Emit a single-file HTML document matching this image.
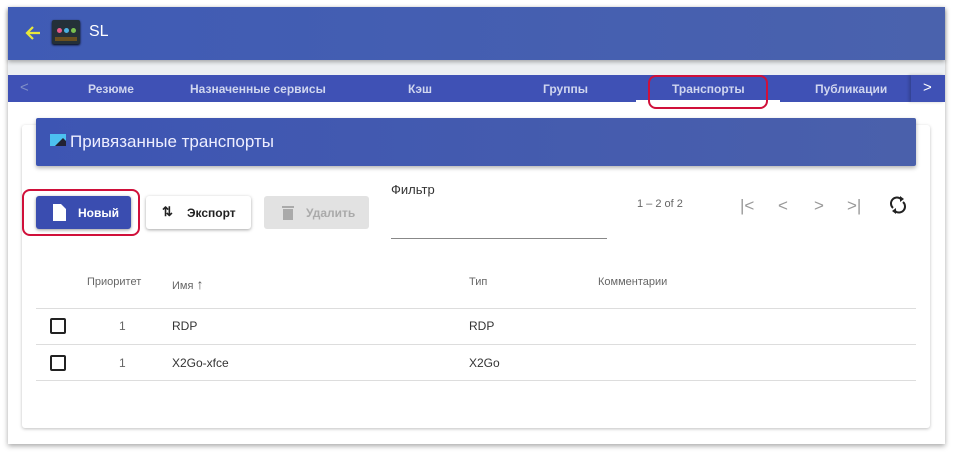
<!DOCTYPE html>
<html><head><meta charset="utf-8"><style>
*{box-sizing:border-box;margin:0;padding:0}
body{width:958px;height:457px;background:#fff;font-family:"Liberation Sans",Roboto,sans-serif;position:relative;overflow:hidden}
.outer{position:absolute;left:8px;top:7px;width:937px;height:437px;background:#fff;box-shadow:0 2px 5px rgba(0,0,0,.35)}
.hdr{position:absolute;left:8px;top:7px;width:937px;height:53px;background:linear-gradient(90deg,#3f5bb5,#4a62ad);box-shadow:0 2px 4px rgba(0,0,0,.3);z-index:2}
.strip{position:absolute;left:8px;top:60px;width:937px;height:15px;background:#eceff2}
.tabs{position:absolute;left:8px;top:75px;width:937px;height:27px;background:#3f51b5;color:#d0d6ef;font-size:12px;font-weight:bold}
.tabs span{position:absolute;top:7px}
.card{position:absolute;left:22px;top:125px;width:908px;height:303px;background:#fff;box-shadow:0 1px 3px rgba(0,0,0,.25);border-radius:3px}
.title{position:absolute;left:36px;top:118px;width:880px;height:48px;background:linear-gradient(90deg,#3d55b3,#4a60ab);border-radius:2px;box-shadow:0 2px 4px rgba(0,0,0,.3);color:#eef;font-size:17px}
.btn{position:absolute;top:196px;height:33px;border-radius:3px;font-size:12px;font-weight:bold}
.red{position:absolute;border:2px solid #d0103a;border-radius:8px}
.th{position:absolute;top:276px;font-size:11px;color:#666}
.td{position:absolute;font-size:12px;color:#333}
.line{position:absolute;left:36px;width:880px;height:1px;background:#ddd}
.cb{position:absolute;left:50px;width:16px;height:16px;border:2px solid #222;border-radius:2px}
.pg{position:absolute;top:196px;font-size:17px;color:#999}
</style></head><body>
<div class="outer"></div>
<div class="hdr">
<svg style="position:absolute;left:16px;top:17px" width="18" height="18" viewBox="0 0 18 18"><path d="M16 9H3M9 3L3 9l6 6" stroke="#e8e83a" stroke-width="2.2" fill="none"/></svg>
<div style="position:absolute;left:44px;top:13px;width:28px;height:24px;background:#243038;border-radius:2px;box-shadow:0 1px 2px #000"><span style="position:absolute;left:5px;top:8px;width:5px;height:5px;border-radius:50%;background:#e85a8a"></span><span style="position:absolute;left:12px;top:8px;width:5px;height:5px;border-radius:50%;background:#4ab0e0"></span><span style="position:absolute;left:19px;top:8px;width:5px;height:5px;border-radius:50%;background:#7ac050"></span><span style="position:absolute;left:3px;bottom:3px;width:22px;height:4px;background:#6a5020"></span></div>
<span style="position:absolute;left:81px;top:16px;color:#fff;font-size:16px">SL</span>
</div>
<div class="strip"></div>
<div class="tabs">
<span style="left:12px;top:4px;font-weight:normal;font-size:15px;color:#8090c8">&lt;</span>
<span style="left:80px">Резюме</span>
<span style="left:182px">Назначенные сервисы</span>
<span style="left:400px">Кэш</span>
<span style="left:535px">Группы</span>
<span style="left:664px">Транспорты</span>
<span style="left:807px">Публикации</span>
<div style="position:absolute;left:628px;bottom:0;width:144px;height:2px;background:#fff"></div>
<div style="position:absolute;left:903px;top:0;width:34px;height:27px;background:#3f51b5;box-shadow:-2px 0 3px rgba(0,0,0,.2)"><span style="left:12px;top:4px;font-weight:normal;font-size:15px;color:#fff">&gt;</span></div>
</div>
<div class="red" style="left:648px;top:75px;width:120px;height:34px"></div>
<div class="card"></div>
<div class="title">
<svg style="position:absolute;left:14px;top:16px" width="16" height="14" viewBox="0 0 16 14"><rect x="0" y="0" width="16" height="12" fill="#4cc0f0"/><path d="M5 12L13 4l3 3v5z" fill="#223"/></svg>
<span style="position:absolute;left:34px;top:14px">Привязанные транспорты</span>
</div>
<div class="btn" style="left:36px;background:#3a4db0;width:95px;color:#fff;box-shadow:0 1px 3px rgba(0,0,0,.4)">
<svg style="position:absolute;left:17px;top:8px" width="13" height="17" viewBox="0 0 13 17"><path d="M0 0h8l5 5v12H0z" fill="#fff"/></svg><span style="position:absolute;left:42px;top:10px">Новый</span></div>
<div class="red" style="left:22px;top:189px;width:118px;height:47px"></div>
<div class="btn" style="left:146px;width:105px;background:#fff;color:#222;box-shadow:0 1px 3px rgba(0,0,0,.35)"><span style="position:absolute;left:16px;top:8px;font-size:13px">⇅</span><span style="position:absolute;left:41px;top:10px">Экспорт</span></div>
<div class="btn" style="left:264px;width:105px;background:#e2e2e2;color:#aaa"><svg style="position:absolute;left:18px;top:9px" width="12" height="15" viewBox="0 0 12 15"><path d="M0 1h12v2H0zM1 4h10v11H1z" fill="#aaa"/></svg><span style="position:absolute;left:42px;top:10px">Удалить</span></div>
<span style="position:absolute;left:391px;top:182px;font-size:13px;color:#333">Фильтр</span>
<div style="position:absolute;left:391px;top:238px;width:216px;height:1px;background:#888"></div>
<span style="position:absolute;left:637px;top:198px;font-size:11px;color:#666">1 – 2 of 2</span>
<span class="pg" style="left:740px">|&lt;</span><span class="pg" style="left:778px">&lt;</span><span class="pg" style="left:814px">&gt;</span><span class="pg" style="left:847px">&gt;|</span>
<svg style="position:absolute;left:889px;top:196px" width="18" height="18" viewBox="0 0 18 18"><path d="M4 12A6 6 0 0 1 12 3M14 6A6 6 0 0 1 6 15" stroke="#222" stroke-width="2" fill="none"/><path d="M11 0l4 3-4 3zM7 12l-4 3 4 3z" fill="#222"/></svg>
<span class="th" style="left:87px">Приоритет</span>
<span class="th" style="left:172px">Имя <b style="font-size:14px;color:#555">↑</b></span>
<span class="th" style="left:469px">Тип</span>
<span class="th" style="left:598px">Комментарии</span>
<div class="line" style="top:308px"></div>
<div class="line" style="top:344px"></div>
<div class="line" style="top:380px"></div>
<div class="cb" style="top:318px"></div><div class="cb" style="top:355px"></div>
<span class="td" style="left:119px;top:319px;color:#666">1</span><span class="td" style="left:172px;top:319px">RDP</span><span class="td" style="left:469px;top:319px">RDP</span>
<span class="td" style="left:119px;top:356px;color:#666">1</span><span class="td" style="left:172px;top:356px">X2Go-xfce</span><span class="td" style="left:469px;top:356px">X2Go</span>
</body></html>
